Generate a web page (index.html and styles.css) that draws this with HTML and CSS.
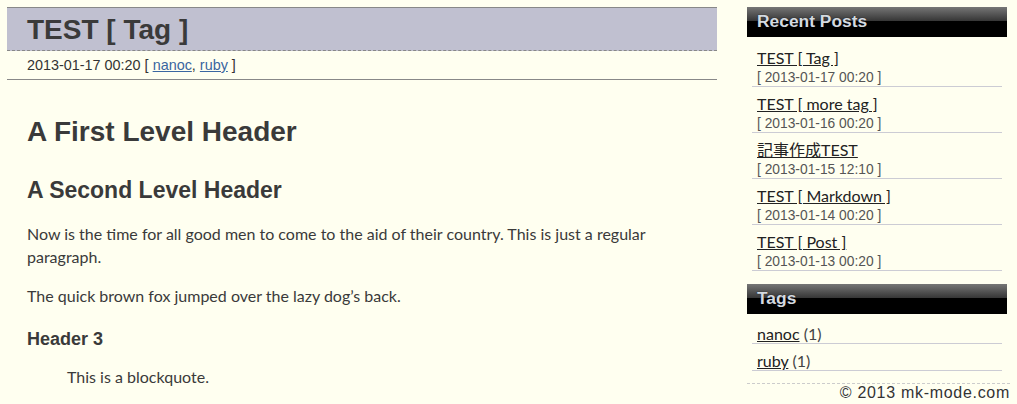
FILE: index.html
```html
<!DOCTYPE html>
<html>
<head>
<meta charset="utf-8">
<link rel="stylesheet" href="styles.css">
</head>
<body>
<div class="page">
  <main class="main">
    <header class="post-head">
      <h1 class="post-title">TEST [ Tag ]</h1>
      <div class="post-meta">2013-01-17 00:20 [ <a href="#">nanoc</a>, <a href="#">ruby</a> ]</div>
    </header>
    <article class="post-body">
      <h1 class="h1">A First Level Header</h1>
      <h2 class="h2">A Second Level Header</h2>
      <p class="para">Now is the time for all good men to come to the aid of their country. This is just a regular paragraph.</p>
      <p class="para">The quick brown fox jumped over the lazy dog’s back.</p>
      <h3 class="h3">Header 3</h3>
      <blockquote class="quote">This is a blockquote.</blockquote>
    </article>
  </main>
  <aside class="side">
    <h2 class="side-head">Recent Posts</h2>
    <ul class="posts">
      <li class="post-item"><a href="#">TEST [ Tag ]</a><span class="date">[ 2013-01-17 00:20 ]</span></li>
      <li class="post-item"><a href="#">TEST [ more tag ]</a><span class="date">[ 2013-01-16 00:20 ]</span></li>
      <li class="post-item"><a href="#">記事作成TEST</a><span class="date">[ 2013-01-15 12:10 ]</span></li>
      <li class="post-item"><a href="#">TEST [ Markdown ]</a><span class="date">[ 2013-01-14 00:20 ]</span></li>
      <li class="post-item"><a href="#">TEST [ Post ]</a><span class="date">[ 2013-01-13 00:20 ]</span></li>
    </ul>
    <h2 class="side-head tags-head">Tags</h2>
    <ul class="tags">
      <li class="tag-item"><a href="#">nanoc</a> (1)</li>
      <li class="tag-item"><a href="#">ruby</a> (1)</li>
    </ul>
    <footer class="foot">© 2013 mk-mode.com</footer>
  </aside>
</div>
</body>
</html>
```

FILE: styles.css
```css
html, body {
  margin: 0;
  padding: 0;
  background: #fffff0;
}
body {
  font-family: Lato, "Noto Sans CJK JP", sans-serif;
  color: #333;
}
.page {
  display: flex;
  padding: 7px 10px 0 7px;
  gap: 30px;
}
.main {
  width: 710px;
  flex: none;
}
.post-head {
  border-top: 1px solid #888;
  border-bottom: 1px solid #888;
}
.post-title {
  margin: 0;
  height: 43px;
  box-sizing: border-box;
  padding: 6px 20px 0;
  background: #c0c0d0;
  border-bottom: 1px dashed #888;
  font-family: "Liberation Sans", Arial, sans-serif;
  font-weight: bold;
  font-size: 28px;
  line-height: 32px;
  color: #3a3a3a;
}
.post-meta {
  height: 28px;
  box-sizing: border-box;
  padding: 5px 20px 0;
  font-family: "Liberation Sans", Arial, sans-serif;
  font-size: 14.4px;
  line-height: 18px;
  color: #333;
}
.post-meta a {
  color: #3a66a0;
}
.post-body {
  padding: 0 20px;
}
.h1 {
  margin: 36px 0 0;
  font-family: "Liberation Sans", Arial, sans-serif;
  font-size: 28px;
  line-height: 32px;
  font-weight: bold;
  color: #3a3a3a;
}
.h2 {
  margin: 28px 0 0;
  font-family: "Liberation Sans", Arial, sans-serif;
  font-size: 23px;
  line-height: 28px;
  font-weight: bold;
  color: #3a3a3a;
}
.para {
  margin: 18px 0 0;
  font-size: 16px;
  line-height: 23px;
  color: #3a3a3a;
}
.para + .para {
  margin-top: 16px;
}
.h3 {
  margin: 20px 0 0;
  font-family: "Liberation Sans", Arial, sans-serif;
  font-size: 18px;
  line-height: 24px;
  font-weight: bold;
  color: #3a3a3a;
}
.quote {
  margin: 14px 0 0 40px;
  font-size: 16px;
  line-height: 23px;
  color: #3a3a3a;
}
.side {
  width: 260px;
  flex: none;
}
.side-head {
  margin: 0;
  height: 30px;
  box-sizing: border-box;
  padding: 3px 10px 0;
  background: linear-gradient(#767676 0%, #353535 47%, #000 47%, #000 100%);
  font-family: "Liberation Sans", Arial, sans-serif;
  font-size: 17.4px;
  line-height: 22px;
  font-weight: bold;
  color: #d4dae0;
  text-shadow: 0 0 1px #000;
}
.posts, .tags {
  list-style: none;
  margin: 0;
  padding: 4px 5px 0;
}
.post-item {
  display: flex;
  flex-direction: column;
  padding: 7px 5px 0;
  border-bottom: 1px solid #ccccd4;
}
.post-item a {
  font-size: 16px;
  line-height: 20px;
  color: #222;
  align-self: flex-start;
}
.date {
  margin-top: 2px;
  font-family: "Liberation Sans", Arial, sans-serif;
  font-size: 13.8px;
  line-height: 16px;
  color: #555;
}
.tags-head {
  margin-top: 13px;
}
.tags {
  padding-top: 3px;
}
.tag-item {
  padding: 7px 5px 0;
  border-bottom: 1px solid #ccccd4;
  font-size: 16px;
  line-height: 19px;
  color: #444;
}
.tag-item a {
  color: #222;
}
.foot {
  margin-top: 12px;
  margin-right: -3px;
  border-top: 1px dashed #ccc;
  text-align: right;
  font-family: "Liberation Sans", Arial, sans-serif;
  font-size: 16px;
  letter-spacing: 0.7px;
  line-height: 17px;
  color: #333;
  text-shadow: 1px 1px 1px #fff;
}
```
